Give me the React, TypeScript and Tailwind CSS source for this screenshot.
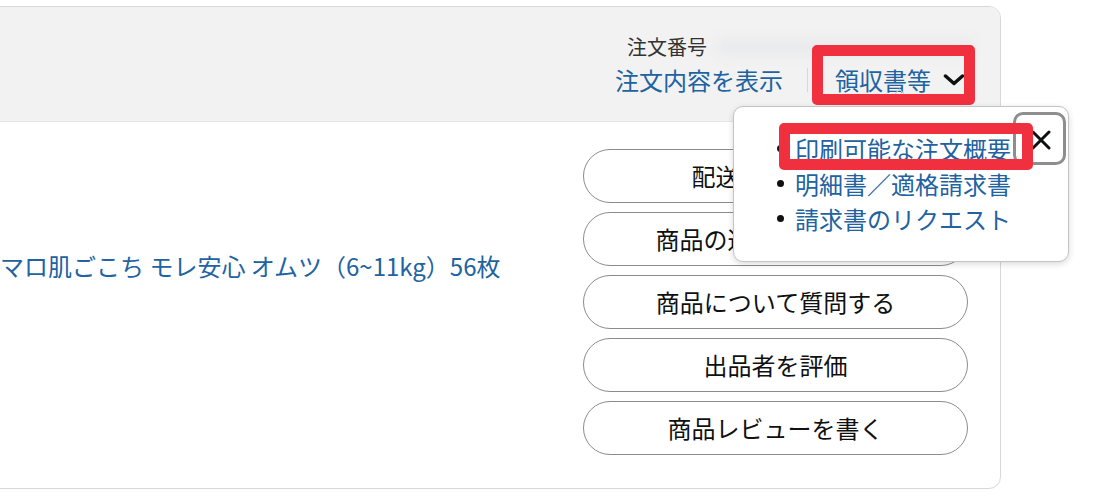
import React from "react";

const font = {
  fontFamily: '"Noto Sans CJK JP", "Noto Sans", sans-serif',
};

const buttons = [
  "配送状況を確認",
  "商品の返品または交換",
  "商品について質問する",
  "出品者を評価",
  "商品レビューを書く",
];

const items = ["印刷可能な注文概要", "明細書／適格請求書", "請求書のリクエスト"];

export default function App() {
  return (
    <div
      className="relative w-[1100px] h-[499px] bg-white overflow-hidden"
      style={font}
    >
      <div className="pt-[6px]">
        <div className="ml-[-12px] w-[1013px] border border-[#d5d9d9] rounded-[12px] overflow-hidden">
          {/* header */}
          <div className="h-[115px] bg-[#f2f2f2] border-b border-[#e6e6e6] flex flex-col items-end pr-[35px] pt-[28px]">
            <div className="flex items-center mr-[-8px]">
              <span className="text-[20px] leading-[24px] text-[#333333]">注文番号</span>
              <div className="ml-[10px] w-[256px] h-[16px] bg-[#e9eaec] blur-[6px] rounded" />
            </div>
            <div className="flex items-center mt-[4px] text-[24px] leading-[34px]">
              <span className="text-[#2162a1]">注文内容を表示</span>
              <span className="ml-[24px] w-px h-[24px] bg-[#d8d8d8]" />
              <div className="relative ml-[27px] flex items-center">
                <span className="text-[#2162a1]">領収書等</span>
                <svg className="ml-[12px]" width="22" height="12" viewBox="0 0 22 12">
                  <path
                    d="M2.5 2 L11 9.5 L19.5 2"
                    fill="none"
                    stroke="#0f1111"
                    strokeWidth="3.5"
                    strokeLinecap="round"
                    strokeLinejoin="round"
                  />
                </svg>
                <div className="absolute left-[-23px] right-[-10px] top-[-18px] bottom-[-8px] border-[11px] border-[#f0303f] rounded-[5px]" />
              </div>
            </div>
          </div>
          {/* body */}
          <div className="flex items-start pt-[27px] pb-[33px]">
            <div className="flex-1 pl-[11px]">
              <div className="mt-[101px] h-[32px] text-[24px] leading-[32px] text-[#2162a1] whitespace-nowrap">
                マロ肌ごこち モレ安心 オムツ（6~11kg）56枚
              </div>
            </div>
            <div className="w-[385px] mr-[32px] flex flex-col gap-[9px]">
              {buttons.map((b) => (
                <div
                  key={b}
                  className="h-[54px] rounded-full border-[1.5px] border-[#8c8c8c] bg-white flex items-center justify-center text-[24px] text-[#0f1111] whitespace-nowrap"
                >
                  {b}
                </div>
              ))}
            </div>
          </div>
        </div>
      </div>

      {/* popover caret */}
      <div className="absolute left-[896px] top-[90px] w-[7px] h-[7px] rotate-45 border-l border-t border-[#cfcfcf]" />

      {/* popover */}
      <div className="absolute left-[733px] top-[106px] w-[336px] h-[156px] bg-white border border-[#c4c4c4] rounded-[10px] shadow-[0_2px_6px_rgba(0,0,0,0.15)]">
        <ul className="pt-[24px] pl-[43px]">
          {items.map((t) => (
            <li key={t} className="flex items-center text-[24px] leading-[35px]">
              <span className="w-[7px] h-[7px] rounded-full bg-[#0f1111]" />
              <span className="ml-[11px] text-[#2162a1] whitespace-nowrap">{t}</span>
            </li>
          ))}
        </ul>
        <div className="absolute top-[5px] right-[2px] w-[53px] h-[53px] border-[3px] border-[#8e8e8e] rounded-[10px] bg-white flex items-center justify-center">
          <svg width="20" height="20" viewBox="0 0 20 20" className="ml-[2px] mt-[2px]">
            <path d="M2 2 L18 18 M18 2 L2 18" stroke="#0f1111" strokeWidth="3" strokeLinecap="round" />
          </svg>
        </div>
        <div className="absolute left-[45px] top-[16px] w-[254px] h-[47px] border-[11px] border-[#f0303f] rounded-[5px]" />
      </div>
    </div>
  );
}
